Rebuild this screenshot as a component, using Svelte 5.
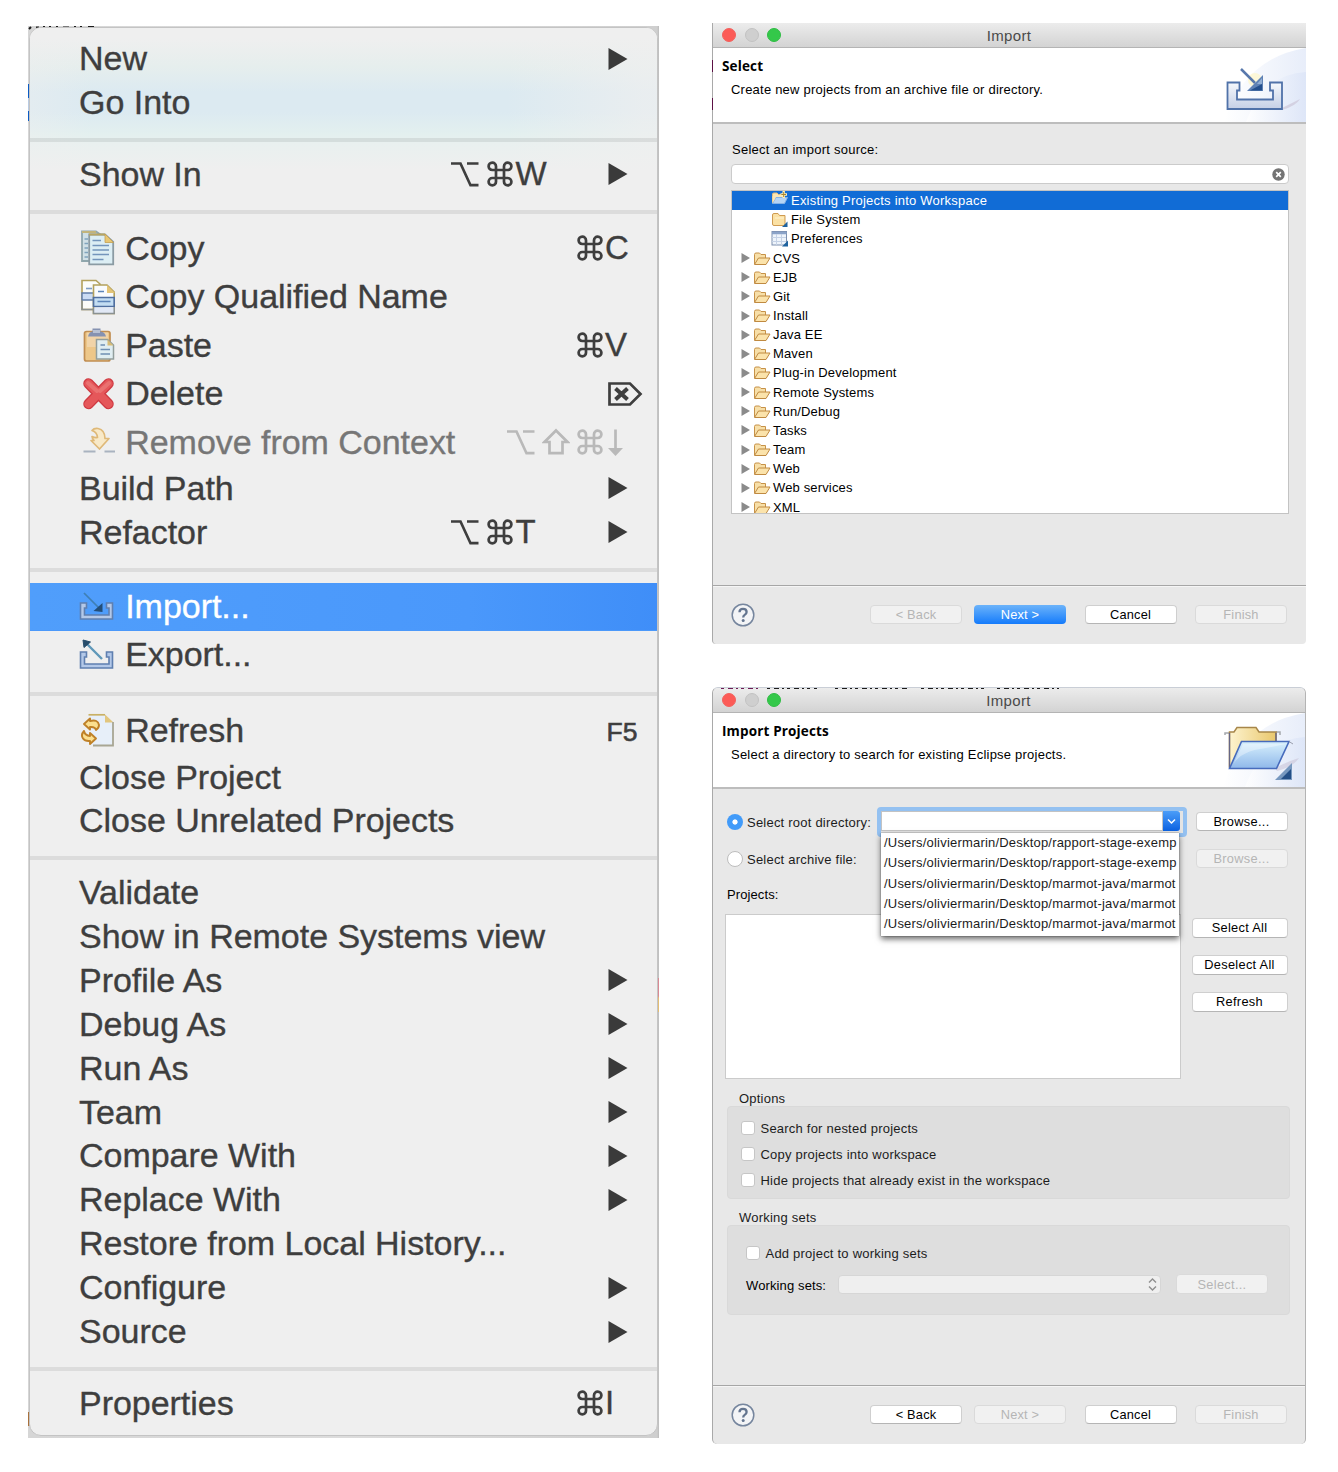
<script>
  const menu = [
    { label: 'New', arrow: true },
    { label: 'Go Into' },
    { sep: true },
    { label: 'Show In', mods: ['opt', 'cmd'], key: 'W', arrow: true },
    { sep: true },
    { label: 'Copy', icon: 'copy', mods: ['cmd'], key: 'C' },
    { label: 'Copy Qualified Name', icon: 'qualified' },
    { label: 'Paste', icon: 'paste', mods: ['cmd'], key: 'V' },
    { label: 'Delete', icon: 'delete', mods: [], special: 'del' },
    { label: 'Remove from Context', icon: 'remove', mods: ['opt', 'shift', 'cmd'], special: 'down', disabled: true },
    { label: 'Build Path', arrow: true },
    { label: 'Refactor', mods: ['opt', 'cmd'], key: 'T', arrow: true },
    { sep: true },
    { label: 'Import...', icon: 'import', active: true },
    { label: 'Export...', icon: 'export' },
    { sep: true },
    { label: 'Refresh', icon: 'refresh', mods: [], key: 'F5', small: true },
    { label: 'Close Project' },
    { label: 'Close Unrelated Projects' },
    { sep: true },
    { label: 'Validate' },
    { label: 'Show in Remote Systems view' },
    { label: 'Profile As', arrow: true },
    { label: 'Debug As', arrow: true },
    { label: 'Run As', arrow: true },
    { label: 'Team', arrow: true },
    { label: 'Compare With', arrow: true },
    { label: 'Replace With', arrow: true },
    { label: 'Restore from Local History...' },
    { label: 'Configure', arrow: true },
    { label: 'Source', arrow: true },
    { sep: true },
    { label: 'Properties', mods: ['cmd'], key: 'I' }
  ];

  const wizards = [
    { label: 'Existing Projects into Workspace', icon: 'existing', selected: true },
    { label: 'File System', icon: 'files' },
    { label: 'Preferences', icon: 'prefs' }
  ];
  const folders = ['CVS', 'EJB', 'Git', 'Install', 'Java EE', 'Maven', 'Plug-in Development', 'Remote Systems',
    'Run/Debug', 'Tasks', 'Team', 'Web', 'Web services', 'XML'];

  const paths = [
    '/Users/oliviermarin/Desktop/rapport-stage-exemp',
    '/Users/oliviermarin/Desktop/rapport-stage-exemp',
    '/Users/oliviermarin/Desktop/marmot-java/marmot',
    '/Users/oliviermarin/Desktop/marmot-java/marmot',
    '/Users/oliviermarin/Desktop/marmot-java/marmot'
  ];
  const options = ['Search for nested projects', 'Copy projects into workspace', 'Hide projects that already exist in the workspace'];
</script>

{#snippet keyGlyph(name)}
  {#if name === 'cmd'}
    <svg class="glyph" width="28" height="28" viewBox="0 0 28 28"><path d="M10 10V6.2A3.7 3.7 0 1 0 6.300 10H21.700A3.700 3.700 0 1 0 18 6.200V21.700A3.700 3.700 0 1 0 21.700 18H6.300A3.700 3.700 0 1 0 10 21.700Z" /></svg>
  {:else if name === 'opt'}
    <svg class="glyph wide" width="30" height="28" viewBox="0 0 30 28"><path d="M1 3.500H10.500L20.500 25.200H28.500M17 3.500H28.500" /></svg>
  {:else if name === 'shift'}
    <svg class="glyph shift" width="28" height="28" viewBox="0 0 28 28"><path d="M14 2.500L25.500 14H20.500V25.200H7.500V14H2.500Z" /></svg>
  {:else if name === 'down'}
    <svg class="glyph" width="20" height="28" viewBox="0 0 20 28"><path d="M10.500 1.500V22" /><path class="solid" d="M3 20H18L10.500 28Z" /></svg>
  {:else}
    <svg class="glyph" width="38" height="28" viewBox="0 0 38 28"><path d="M4.500 3.500H25L35.500 14L25 24.500H4.500Z" /><path class="heavy" d="M10.500 8.500L22.500 19.500M22.500 8.500L10.500 19.500" /></svg>
  {/if}
{/snippet}

{#snippet menuIcon(name)}
  <svg class="micon" width="36" height="36" viewBox="0 0 36 36">
    {#if name === 'copy'}
      <path d="M3 1.500H17L22 5V31H3Z" fill="#d0e0e6" stroke="#8fa6ac" stroke-width="1.800" />
      <path d="M3 2H17" stroke="#c2b47a" stroke-width="1.800" />
      <path d="M5.500 9H9M5.500 13.500H9M5.500 18H9M5.500 22.500H9M5.500 27H9" stroke="#7fa3bd" stroke-width="1.500" />
      <path d="M10.200 4.500H26L34.200 12V34.300H10.200Z" fill="#dceef4" stroke="#8b9ba3" stroke-width="1.800" />
      <path d="M10 4.500H26" stroke="#b8a662" stroke-width="1.800" />
      <path d="M26 4L34.500 12.500H26Z" fill="#e8c773" stroke="#c4a052" stroke-width=".8" />
      <path d="M13.500 10.500H22M13.500 15.500H30M13.500 20H30M13.500 24.500H30M13.500 29.500H24.500" stroke="#7395bb" stroke-width="1.700" />
    {:else if name === 'qualified'}
      <path d="M3 1.500H17L21 5V30.500H3Z" fill="#fbfcfa" stroke="#b3a15c" stroke-width="1.600" />
      <path d="M3 14H21V21H3Z" fill="#cbdcf4" stroke="#627da9" stroke-width="1.500" />
      <path d="M3 22V30.500H14" fill="none" stroke="#8a9191" stroke-width="1.600" />
      <path d="M7 9.500H13" stroke="#7e9cc4" stroke-width="1.600" />
      <path d="M14.500 6H28L35.200 13V34.500H14.500Z" fill="#f9fbfd" stroke="#b3a15c" stroke-width="1.600" />
      <path d="M28 6L36 14H28Z" fill="#e3c477" />
      <path d="M14.500 18.500H35.200V27.500H14.500Z" fill="#c3ddf2" stroke="#506f9f" stroke-width="1.700" />
      <path d="M14.500 29V34.500H35.200V28" fill="#e1e8f5" stroke="#8a9191" stroke-width="1.500" />
      <path d="M19 12.500H25M18.500 22.500H31.500" stroke="#5d85b9" stroke-width="1.600" />
    {:else if name === 'paste'}
      <rect x="5.500" y="4.500" width="25.500" height="29.500" rx="2" fill="#edc789" stroke="#c18e52" stroke-width="1.700" />
      <path d="M8 5.500H29V20H8Z" fill="#f3dcb8" opacity=".65" />
      <path d="M9 9.500Q10 5 13.500 4.500V1.500H21.500V4.500Q26 5 27 9.500Z" fill="#8592b1" />
      <path d="M14 3H21V6H14Z" fill="#b7c1d3" />
      <path d="M17.500 12.500H28.500L34.500 18V32H17.500Z" fill="#e0eef2" stroke="#929e9c" stroke-width="1.500" />
      <path d="M28.500 12.500L34.500 18.500H28.500Z" fill="#d8bc76" />
      <path d="M21.500 18H26M21.500 22.500H31M21.500 27H31" stroke="#6f90b3" stroke-width="1.600" />
    {:else if name === 'delete'}
      <path d="M9.500 7.500L29.500 28M29.500 7.500L9.500 28" stroke="#cf3a42" stroke-width="10.500" stroke-linecap="round" />
      <path d="M9.500 7.500L29.500 28M29.500 7.500L9.500 28" stroke="#e5575a" stroke-width="8" stroke-linecap="round" />
      <path d="M9 7L18 15M30 7L21 15" stroke="#ee8380" stroke-width="4" stroke-linecap="round" opacity=".6" />
    {:else if name === 'remove'}
      <path d="M13 6.500Q15 4 19 4.500Q26 6 26 14.500H30L20.500 25L12 16.500H15Q13 14 13 12.500Q16 14 18.500 13.500Q18 8 13 6.500Z" fill="#f8e9c8" stroke="#dfb978" stroke-width="1.700" stroke-linejoin="round" />
      <path d="M4.500 27.500H16.500M25.500 27.500H36" stroke="#a9b3c0" stroke-width="2.200" />
    {:else if name === 'import' || name === 'export'}
      <path d="M1.500 15H7.500V20H5.500V27H30V20H27.500V15H33.500V31H1.500Z" fill="#b3c8e8" stroke="#5f7fb0" stroke-width="1.600" />
      {#if name === 'import'}
        <path d="M5 5L20 20" stroke="#3f7fb4" stroke-width="1.700" /><path d="M23.500 15V24L14.500 23Z" fill="#234e78" />
      {:else}
        <path d="M8 7L23 22" stroke="#5f98b9" stroke-width="2.400" /><path d="M4 3L11.500 5L5 10.500Z" fill="#274d6b" stroke="#274d6b" />
      {/if}
    {:else if name === 'refresh'}
      <path d="M9.500 1.800H26L34 9V32.500H12.500Z" fill="#e7eff9" />
      <path d="M9.500 1.800H26" stroke="#c9b165" stroke-width="1.700" />
      <path d="M26 1.500L34.500 9.500H26Z" fill="#e2c67e" />
      <path d="M34 9V32.500H14" stroke="#a8a693" stroke-width="1.800" fill="none" />
      <path d="M5 11L11 5.500V8Q19 6 20 12Q20 15 17 17Q16 13.500 11 14V16.500Z" fill="#fbdf8f" stroke="#bf8128" stroke-width="1.900" stroke-linejoin="round" />
      <path d="M17 25.500L11 20V23Q6 22.500 5 18Q1.500 22 4 25.500Q6 28.500 11 28V31Z" fill="#fbdf8f" stroke="#bf8128" stroke-width="1.900" stroke-linejoin="round" />
    {/if}
  </svg>
{/snippet}

{#snippet treeIcon(name)}
  <svg class="ticon" width="18" height="17" viewBox="0 0 18 17">
    {#if name === 'folder'}
      <path d="M1.500 14V4.500Q1.500 3 3 3H6.500L8 4.500H12.500V8" fill="#f7dfa8" stroke="#c79248" />
      <path d="M1.500 14.500L5.500 8H17L13 14.500Z" fill="#fbe3ab" stroke="#c08a41" stroke-linejoin="round" />
    {:else if name === 'existing'}
      <path d="M1.500 12V3Q1.500 2 3 2H6L7.500 3.500H12.500V7" fill="#fbe6b5" stroke="#e3bd7c" />
      <path d="M1.500 12.500L5 6.500H16.500L13.500 12.500Z" fill="#b4d4f5" stroke="#84b2e6" />
      <path d="M1.500 12V5L4.500 7Z" fill="#fbe6b5" />
      <path d="M12.700 0V7M9.500 3.500H16" stroke="#fff2b8" stroke-width="2.400" /><path d="M12.700 1V6M10.300 3.500H15" stroke="#a98532" />
    {:else if name === 'files'}
      <path d="M1.500 13V4Q1.500 2.500 3 2.500H7L8.500 4.500H14V13Q14 14.500 12.500 14.500H3Q1.500 14.500 1.500 13Z" fill="#fbe1a4" stroke="#cf9b51" />
      <path d="M4 7H13" stroke="#fff3d0" /><path d="M16.500 10.500V16H11Z" fill="#1f639f" />
    {:else}
      <rect x="1" y="1.500" width="14.500" height="13.500" fill="#eef4fb" stroke="#7c8fae" />
      <path d="M1 3H15.500" stroke="#8ba3c8" stroke-width="2.500" /><path d="M5.500 4V15M1 7.500H15M10.500 4V15M1 11.500H15" stroke="#c5d2e6" />
      <path d="M17 10.500V16.500H11Z" fill="#1f639f" />
    {/if}
  </svg>
{/snippet}

{#snippet titlebar()}
  <div class="titlebar">
    <div class="lights"><i class="red"></i><i class="grey"></i><i class="green"></i></div>
    <span>Import</span>
  </div>
{/snippet}

{#snippet help()}
  <svg class="help" width="24" height="24" viewBox="0 0 24 24">
    <circle cx="12" cy="12" r="10.800" fill="#f3f4f6" stroke="#76869e" stroke-width="1.500" />
    <path d="M8.500 9.300Q8.500 5.900 12 5.900Q15.600 5.900 15.600 9Q15.600 10.700 13.700 11.900Q12.200 12.900 12.200 14.600" fill="none" stroke="#64758f" stroke-width="2.300" />
    <circle cx="12.200" cy="17.600" r="1.500" fill="#64758f" />
  </svg>
{/snippet}

<div class="page">
  <div class="backdrop">
    <i class="scrap blue"></i><i class="scrap orange"></i><i class="scrap pink"></i>
    <svg class="residue" width="68" height="4" viewBox="0 0 68 4"><path d="M1 3L3 1M8 1.500H11M15 1H17M21 1H23M28 1H30M35 1.500H41M46 1H48M52 1H54M60 1H66" /></svg>
    <nav class="menu">
      <div class="tint"></div>
      {#each menu as item}
        {#if item.sep}
          <div class="sep"></div>
        {:else}
          <div class="row" class:tall={item.icon} class:active={item.active} class:disabled={item.disabled}>
            {#if item.icon}{@render menuIcon(item.icon)}{/if}
            <span class="label">{item.label}</span>
            {#if item.mods}
              <span class="mods">{#each item.mods as m}{@render keyGlyph(m)}{/each}</span>
              <span class="key" class:inner={item.arrow} class:small={item.small}>
                {#if item.special}{@render keyGlyph(item.special)}{:else}{item.key}{/if}
              </span>
            {/if}
            {#if item.arrow}
              <svg class="arrow" width="20" height="24" viewBox="0 0 20 24"><path d="M.500 1L19.500 12L.500 23Z" /></svg>
            {/if}
          </div>
        {/if}
      {/each}
    </nav>
  </div>

  <div class="dialogs">
    <section class="dialog first">
      {@render titlebar()}
      <header>
        <div><h1>Select</h1><p>Create new projects from an archive file or directory.</p></div>
        <svg class="banner" width="82" height="74" viewBox="0 0 82 74">
          <defs>
            <linearGradient id="sky" x1="0" x2="1"><stop offset="0" stop-color="#fff" /><stop offset="1" stop-color="#dbe4f7" /></linearGradient>
            <linearGradient id="tray" x1="0" x2="0" y1="0" y2="1"><stop offset="0" stop-color="#f5f8fc" /><stop offset="1" stop-color="#c5d0e6" /></linearGradient>
          </defs>
          <path d="M0 74Q20 10 82 0V74Z" fill="url(#sky)" opacity=".65" /><path d="M22 74Q40 26 82 24V74Z" fill="url(#sky)" opacity=".8" />
          <path d="M58 60L76 51Q72 58 58 62Z" fill="#c8bfd2" opacity=".6" />
          <path d="M3.500 34.500H15.500V42.500H13V51.500H49V42.500H46V34.500H58V61H3.500Z" fill="url(#tray)" stroke="#5072a9" stroke-width="1.800" />
          <circle cx="31" cy="32" r="7" fill="#fff7c7" opacity=".7" />
          <path d="M17 21L31 35" stroke="#5878ac" stroke-width="2.500" /><path d="M39 27V43H23Z" fill="#5f82b5" /><path d="M38 36V42.500H26Z" fill="#234f8d" /><path d="M38 30V36L33 36Z" fill="#91aed4" />
        </svg>
      </header>
      <div class="content">
        <div class="caption">Select an import source:</div>
        <div class="search">
          <svg width="13" height="13" viewBox="0 0 13 13"><circle cx="6.500" cy="6.500" r="6.200" fill="#747474" /><path d="M4.200 4.200L8.800 8.800M8.800 4.200L4.200 8.800" stroke="#fff" stroke-width="1.700" /></svg>
        </div>
        <div class="tree">
          {#each wizards as w}
            <div class="node leaf" class:selected={w.selected}>{@render treeIcon(w.icon)}<span>{w.label}</span></div>
          {/each}
          {#each folders as f}
            <div class="node">
              <svg class="twist" width="9" height="10" viewBox="0 0 9 10"><path d="M.500 0L9 5L.500 10Z" /></svg>
              {@render treeIcon('folder')}<span>{f}</span>
            </div>
          {/each}
        </div>
      </div>
      <footer>
        {@render help()}
        <button class="off">&lt; Back</button><button class="primary">Next &gt;</button><button class="apart">Cancel</button><button class="off apart">Finish</button>
      </footer>
    </section>

    <section class="dialog second">
      {@render titlebar()}
      <header>
        <div><h1>Import Projects</h1><p>Select a directory to search for existing Eclipse projects.</p></div>
        <svg class="banner" width="82" height="74" viewBox="0 0 82 74">
          <defs>
            <linearGradient id="manila" x1="0" x2="1"><stop offset="0" stop-color="#fdf3cf" /><stop offset="1" stop-color="#e9c76c" /></linearGradient>
            <linearGradient id="glass" x1="0" x2="0" y1="0" y2="1"><stop offset="0" stop-color="#d9f1fd" /><stop offset="1" stop-color="#8fb8ea" /></linearGradient>
          </defs>
          <path d="M0 74Q20 10 82 0V74Z" fill="url(#sky)" opacity=".65" /><path d="M22 74Q40 26 82 24V74Z" fill="url(#sky)" opacity=".8" />
          <path d="M52 55Q66 48 76 45Q70 54 54 58Z" fill="#c5bdd2" opacity=".5" />
          <path d="M2 22V20H7M53 19H57V22" fill="none" stroke="#a5a8ad" stroke-width="1.500" />
          <path d="M6.500 54V19H11L14 14.500H33L36 19H53V54Z" fill="url(#manila)" stroke="#a7864a" stroke-width="1.500" />
          <path d="M6.500 20V55M53 20V30" stroke="#666685" stroke-width="1.300" />
          <path d="M6.500 55.500L18.500 28.500H66L53.500 55.500Z" fill="url(#glass)" stroke="#476bbc" stroke-width="1.600" />
          <path d="M10 52Q17 38 43 35L63 31H20Z" fill="#fff" opacity=".35" />
          <path d="M66 28.500L70 31" stroke="#999ead" />
          <path d="M69 50V67H52Z" fill="#7798bf" /><path d="M68 56V66H58Z" fill="#234f87" />
        </svg>
      </header>
      <div class="content">
        <div class="line root">
          <i class="radio on"></i><span class="text">Select root directory:</span>
          <div class="combo">
            <div class="field"></div>
            <div class="drop"><svg width="17" height="20" viewBox="0 0 17 20"><path d="M5 8.500L8.500 12L12 8.500" fill="none" stroke="#fff" stroke-width="1.500" /></svg></div>
            <div class="list">
              {#each paths as p}<div>{p}</div>{/each}
            </div>
          </div>
          <button>Browse...</button>
        </div>
        <div class="line archive">
          <i class="radio"></i><span class="text">Select archive file:</span>
          <button class="off">Browse...</button>
        </div>
        <div class="projects-label">Projects:</div>
        <div class="projects">
          <div class="box"></div>
          <div class="side"><button>Select All</button><button>Deselect All</button><button>Refresh</button></div>
        </div>
        <div class="group-title">Options</div>
        <div class="group opts">
          {#each options as o}<div class="check"><i></i><span>{o}</span></div>{/each}
        </div>
        <div class="group-title sets">Working sets</div>
        <div class="group ws">
          <div class="check"><i></i><span>Add project to working sets</span></div>
          <div class="pick">
            <span>Working sets:</span>
            <div class="select"><svg width="9" height="13" viewBox="0 0 9 13"><path d="M1 4.500L4.500 1L8 4.500M1 8.500L4.500 12L8 8.500" /></svg></div>
            <button class="off">Select...</button>
          </div>
        </div>
      </div>
      <footer>
        {@render help()}
        <button>&lt; Back</button><button class="off">Next &gt;</button><button class="apart">Cancel</button><button class="off apart">Finish</button>
      </footer>
      <svg class="residue code" width="340" height="2" viewBox="0 0 340 2"><path class="kw" d="M0 1H38" /><path d="M46 1H96M114 1H186M200 1H264M276 1H338" /></svg>
    </section>
  </div>
</div>

<style>
  :global(body) { background: #fff; }
  * { box-sizing: border-box; }
  .page {
    display: flex; align-items: flex-start; gap: 53px; width: 1338px; height: 1472px; padding: 23px 0 0 28px;
    font-family: "Liberation Sans", Arial, sans-serif; overflow: hidden;
  }
  .backdrop { position: relative; width: 631px; height: 1412px; margin-top: 3px; padding: 1px 1px 2px; background: linear-gradient(90deg, #d6d6d6 1px, #dcdcdc 50%, #cfcfcf 629px, #bcbcbc); flex: none; }
  .scrap { position: absolute; left: 0; width: 2px; }
  .blue { top: 58px; height: 37px; background: linear-gradient(#0b5bc4 14px, #b9cbe2 14px 27px, #0b5bc4 27px); }
  .orange { top: 1386px; height: 14px; background: #a9713c; }
  .pink { left: 629px; top: 952px; height: 34px; background: linear-gradient(#d98a94 18px, #e3bd74 20px); }
  .residue { position: absolute; left: 0; top: 0; fill: none; stroke: #1c1c1c; stroke-width: 2; }
  .menu {
    position: relative; height: 1409px; padding-top: 8.700px; background: #efefef; overflow: hidden;
    border: 1px solid #c4c4c4; border-radius: 12px; color: #3e3e3e; font-size: 34px; letter-spacing: -.03px;
    -webkit-text-stroke: .35px;
  }
  .tint {
    position: absolute; inset: 0 0 auto; height: 145px;
    background:
      linear-gradient(90deg, #efefef60, #efefef00 10%, #efefef00 76%, #efefefb0 98%),
      linear-gradient(#efefef 10px, #e6eeed 38px, #dceaf1 64px 84px, #e3f0ef 106px, #e9f0ef 116px, #efefef 142px);
  }
  .sep { position: relative; height: 27.750px; padding-top: 13.400px; }
  .sep::after { content: ""; display: block; height: 4px; background: #00000014; }
  .row { position: relative; display: flex; align-items: center; height: 43.900px; padding-left: 49px; white-space: nowrap; }
  .row.tall { height: 48.500px; }
  .row.active { color: #fff; background: linear-gradient(90deg, #509efb, #4a98fb 70%, #3f8ef8) 0 1px no-repeat; box-shadow: 0 1px #4b99fa; }
  .row.disabled .label { color: #767676; }
  .row.disabled .mods, .row.disabled .key { color: #b9b9b9; }
  .micon { margin-right: 10.200px; flex: none; }
  .label { flex: 1; }
  .mods { display: flex; gap: 7px; align-items: center; margin-right: 1px; }
  .key { display: flex; align-items: center; width: 52px; font-size: 33px; }
  .key.inner { width: 93.500px; padding-left: 1px; }
  .key.small { font-size: 26.500px; padding-left: 1.500px; padding-top: 3px; -webkit-text-stroke: .6px; }
  .glyph { fill: none; stroke: currentColor; stroke-width: 2.700; flex: none; }
  .glyph .solid { fill: currentColor; stroke: none; }
  .glyph .heavy { stroke-width: 4; }
  .glyph.wide { margin-right: -1px; }
  .glyph.shift { margin-right: -1px; }
  .arrow { margin-right: 29px; fill: #3a3a3a; flex: none; }

  .dialogs { display: flex; flex-direction: column; gap: 43px; width: 594px; flex: none; }
  .dialog { position: relative; display: flex; flex-direction: column; background: #e8e8e8; border-left: 1px solid #a9a9a9; font-size: 13px; letter-spacing: .22px; color: #000; white-space: nowrap; }
  .dialog::before { content: ""; position: absolute; left: -1px; top: 37px; width: 1px; height: 50px; background: linear-gradient(#5c1245 12px, #a9a9a9 12px 38px, #5c1245 38px); }
  .first { height: 621px; border-radius: 0 5px 4px 4px; }
  .second { height: 757px; border-right: 1px solid #b4b4b4; border-top: 1px solid #c9ced6; border-radius: 6px 6px 5px 5px; overflow: hidden; }
  .code { left: 8px; top: -1px; height: 2px; stroke-dasharray: 3 4 5 3 2 3; }
  .code .kw { stroke: #6d1a55; }
  .titlebar { display: grid; grid-template-columns: 66px 1fr 66px; align-items: center; height: 25px; background: linear-gradient(#ececec, #d3d3d3); border-bottom: 1px solid #b4b4b4; text-align: center; color: #4a4a4a; font-size: 15px; flex: none; }
  .titlebar span { padding-right: 1px; padding-top: 1px; letter-spacing: .3px; }
  .lights { display: flex; gap: 8.500px; padding-left: 9px; }
  .lights i { width: 14px; height: 14px; border-radius: 50%; flex: none; }
  .red { background: #fc5b57; border: 1px solid #f2625e; }
  .grey { background: #cfcfcf; border: 1px solid #c2c2c2; }
  .green { background: #34c84a; border: 1px solid #2fbd44; }
  header { display: flex; justify-content: space-between; height: 76px; background: #fff; border-bottom: 2px solid #bdbdbd; flex: none; }
  h1 { margin: 9px 0 0 9px; font: 700 13.500px/18px "Open Sans", "Noto Sans", sans-serif; letter-spacing: .15px; }
  p { margin: 7px 0 0 18px; line-height: 16px; }
  .content { flex: 1; }
  footer { display: flex; align-items: flex-start; height: 59px; padding: 18.500px 0 0 17.500px; border-top: 1px solid #a6a6a6; box-shadow: inset 0 1px #f5f5f5; flex: none; }
  .help { margin: -2px 115.500px 0 0; flex: none; }
  button {
    width: 92px; height: 19.500px; padding: 0; border: 1px solid #cfcfcf; border-bottom-color: #b5b5b5; border-radius: 4px; background: #fff;
    font: 12.800px/17px "Liberation Sans", Arial, sans-serif; color: #000; letter-spacing: .3px; flex: none;
  }
  footer button { letter-spacing: .2px; }
  footer button + button { margin-left: 12px; }
  footer button.apart { margin-left: 18.500px; }
  button.off { background: #f1f1f1; border-color: #dadada; color: #b5b5b5; }
  button.primary { border: 0; background: linear-gradient(#6bb3fa, #157bfb); color: #fff; }

  .first .content { padding: 17px 17px 0 18px; }
  .caption { margin-left: 1px; line-height: 18px; letter-spacing: .26px; }
  .search { display: flex; justify-content: flex-end; align-items: center; height: 20px; margin-top: 5px; padding-right: 3px; background: #fff; border: 1px solid #cbcbcb; border-radius: 4px; }
  .tree { height: 324px; margin-top: 6px; border: 1px solid #c3c3c3; background: #fff; overflow: hidden; letter-spacing: .15px; }
  .node { display: flex; align-items: center; height: 19.160px; padding-left: 8.500px; }
  .node.leaf { padding-left: 39px; }
  .node.selected { background: #116cd6; color: #fff; letter-spacing: .22px; }
  .node.selected .ticon { margin-top: -3px; }
  .twist { margin-right: 3.500px; fill: #8b8b8b; }
  .ticon { margin-right: 2px; flex: none; fill: none; }

  .second .content { padding: 18px 14px 0; color: #1c1c1c; }
  .line { display: flex; align-items: center; }
  .line button { margin-left: auto; margin-right: 3.500px; margin-top: -1px; }
  .radio { width: 16px; height: 16px; margin-right: 4px; border: 1px solid #bdbdbd; border-radius: 50%; background: #fff; flex: none; }
  .radio.on { border: 0; background: radial-gradient(circle, #fff 2.200px, #429bf9 3px); }
  .root { height: 30px; }
  .root .text { width: 130px; }
  .combo { position: relative; display: flex; width: 310px; height: 30px; border: 4px solid #94c1f1; border-radius: 4px; background: #e4e4e4; }
  .field { width: 282px; height: 20px; background: #fff; border: 1px solid #c3c3c3; flex: none; }
  .drop { height: 20px; width: 17px; border-radius: 0 3px 3px 0; background: linear-gradient(#4b9df8, #0c62e2); }
  .drop svg { display: block; }
  .list { position: absolute; z-index: 2; left: 0; top: 22px; width: 298px; height: 103px; padding: 0 0 0 3px; background: #fff; box-shadow: 0 3px 6px #0009, 0 0 1px #0009; line-height: 20.300px; font-size: 13px; letter-spacing: .2px; }
  .archive { height: 20px; margin-top: 12px; }
  .projects-label { margin-top: 17px; line-height: 18px; color: #000; letter-spacing: .1px; }
  .projects { display: flex; justify-content: space-between; height: 166px; margin: 10px 3.500px 0 -2px; }
  .box { width: 456px; height: 165px; background: #fff; border: 1px solid #cbcbcb; }
  .side { display: flex; flex-direction: column; gap: 17.500px; padding-top: 4px; }
  .side button { width: 96px; }
  .group-title { margin: 10px 0 -2px 12px; line-height: 18px; }
  .group { margin-right: 1px; border: 1px solid #d9d9d9; border-radius: 4px; background: #dedede; }
  .opts { height: 93px; padding: 8px 0 0 13px; }
  .check { display: flex; align-items: center; height: 26px; }
  .check i { width: 14px; height: 14px; margin-right: 5.500px; border: 1px solid #c6c6c6; border-radius: 3px; background: #fff; }
  .sets { margin-top: 11px; line-height: 16px; }
  .ws { height: 90px; margin-top: .500px; padding: 14.500px 0 0 18px; }
  .pick { display: flex; align-items: center; height: 20px; margin-top: 8px; }
  .pick span { width: 92px; padding-top: 2px; color: #000; letter-spacing: .12px; }
  .select { display: flex; justify-content: flex-end; align-items: center; width: 323px; height: 19px; margin-right: 15px; padding-right: 3px; background: #efefef; border: 1px solid #d6d6d6; border-radius: 4px; }
  .select svg { fill: none; stroke: #8e8e8e; stroke-width: 1.400; }
</style>
